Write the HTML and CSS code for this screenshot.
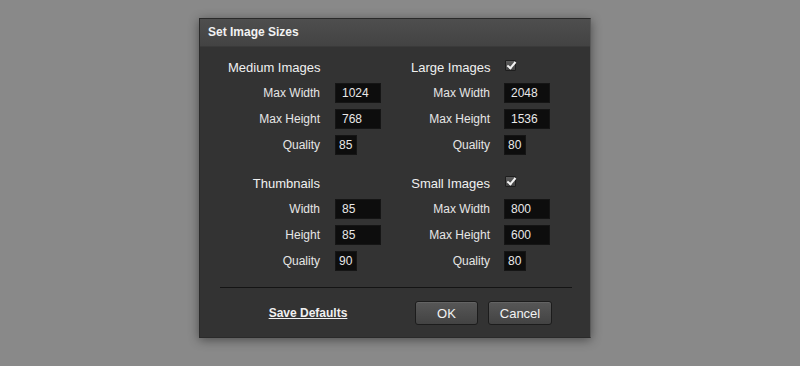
FILE: index.html
```html
<!DOCTYPE html>
<html>
<head>
<meta name="viewport" content="width=device-width, initial-scale=1">
<link rel="stylesheet" href="styles.css">
</head>
<body>

<!-- ************************ dialog ******************************** -->
<div class="dialog">
  <div class="dialog_title">Set Image Sizes</div>

  <div class="dialog_body">
    <div class="sections">

      <div class="group group_left">
        <div class="group_head">Medium Images</div>
        <span></span>
        <label class="field_label">Max Width</label>
        <input class="field wide" type="text" value="1024">
        <label class="field_label">Max Height</label>
        <input class="field wide" type="text" value="768">
        <label class="field_label">Quality</label>
        <input class="field narrow" type="text" value="85">
      </div>

      <div class="group group_right">
        <div class="group_head">Large Images</div>
        <span class="check"></span>
        <label class="field_label">Max Width</label>
        <input class="field wide" type="text" value="2048">
        <label class="field_label">Max Height</label>
        <input class="field wide" type="text" value="1536">
        <label class="field_label">Quality</label>
        <input class="field narrow" type="text" value="80">
      </div>

      <div class="group group_left">
        <div class="group_head">Thumbnails</div>
        <span></span>
        <label class="field_label">Width</label>
        <input class="field wide" type="text" value="85">
        <label class="field_label">Height</label>
        <input class="field wide" type="text" value="85">
        <label class="field_label">Quality</label>
        <input class="field narrow" type="text" value="90">
      </div>

      <div class="group group_right">
        <div class="group_head">Small Images</div>
        <span class="check"></span>
        <label class="field_label">Max Width</label>
        <input class="field wide" type="text" value="800">
        <label class="field_label">Max Height</label>
        <input class="field wide" type="text" value="600">
        <label class="field_label">Quality</label>
        <input class="field narrow" type="text" value="80">
      </div>

    </div>

    <div class="dialog_footer">
      <a class="save_link" href="#">Save Defaults</a>
      <div class="buttons">
        <button class="btn btn_ok">OK</button>
        <button class="btn btn_cancel">Cancel</button>
      </div>
    </div>
  </div>
</div>

</body>
</html>
```

FILE: styles.css
```css
* {box-sizing: border-box}

body {
  margin: 0;
  height: 366px;
  background-color: #898989;
  font-family: "Liberation Sans", Arial, sans-serif;
  overflow: hidden;
}

/* the dialog box */
.dialog {
  width: 392px;
  margin: 18px 0 0 199px;
  background-color: #333333;
  border: 1px solid #2a2a2a;
  border-right-color: #5a5a5a;
  box-shadow: 0 2px 10px rgba(0, 0, 0, 0.45);
}

.dialog_title {
  height: 28px;
  padding: 0 8px;
  line-height: 27px;
  font-size: 12px;
  font-weight: bold;
  color: #f2f2f2;
  background: linear-gradient(#4e4e4e, #434343);
  border-bottom: 1px solid #3a3a3a;
}

.dialog_body {
  padding: 10px 18px 12px 20px;
}

/* two columns of settings */
.sections {
  display: grid;
  grid-template-columns: 183px 1fr;
  row-gap: 18px;
  padding-left: 8px;
}

.group {
  display: grid;
  grid-auto-rows: 20px;
  row-gap: 6px;
  column-gap: 15px;
  align-items: center;
}

.group_left {
  grid-template-columns: 92px auto;
}

.group_right {
  grid-template-columns: 79px auto;
  column-gap: 14px;
}

.group_head {
  text-align: right;
  white-space: nowrap;
  font-size: 13px;
  color: #f0f0f0;
}

.field_label {
  text-align: right;
  white-space: nowrap;
  font-size: 12px;
  color: #e6e6e6;
}

.field {
  height: 20px;
  padding: 0 6px;
  border: 1px solid #151515;
  background-color: #0d0d0d;
  color: #e8e8e8;
  font-family: "Liberation Sans", Arial, sans-serif;
  font-size: 12px;
  outline: none;
}

.field.wide {
  width: 46px;
}

.field.narrow {
  width: 22px;
  padding: 0 3px;
}

/* checkbox, always checked here */
.check {
  position: relative;
  display: block;
  width: 11px;
  height: 11px;
  margin: -3px 0 0 1px;
  background: linear-gradient(#5c5c5c, #444444);
  border: 1px solid #1e1e1e;
  border-radius: 1px;
}

.check::after {
  content: "";
  position: absolute;
  left: 3px;
  top: -1px;
  width: 3px;
  height: 7px;
  border: solid #f4f4f4;
  border-width: 0 2px 2px 0;
  transform: rotate(40deg);
}

/* footer with the buttons */
.dialog_footer {
  display: flex;
  align-items: center;
  margin-top: 16px;
  padding: 13px 20px 0 0;
  border-top: 1px solid #141414;
}

.save_link {
  width: 176px;
  text-align: center;
  font-size: 12px;
  font-weight: bold;
  color: #f0f0f0;
  text-decoration: underline;
}

.buttons {
  margin-left: auto;
  display: flex;
  gap: 10px;
}

.btn {
  height: 24px;
  border: 1px solid #1c1c1c;
  border-radius: 3px;
  background: linear-gradient(#575757, #434343);
  box-shadow: inset 0 1px 0 rgba(255, 255, 255, 0.08);
  color: #f2f2f2;
  font-family: "Liberation Sans", Arial, sans-serif;
  font-size: 13px;
  cursor: pointer;
}

.btn_ok {
  width: 63px;
}

.btn_cancel {
  width: 64px;
}
```
